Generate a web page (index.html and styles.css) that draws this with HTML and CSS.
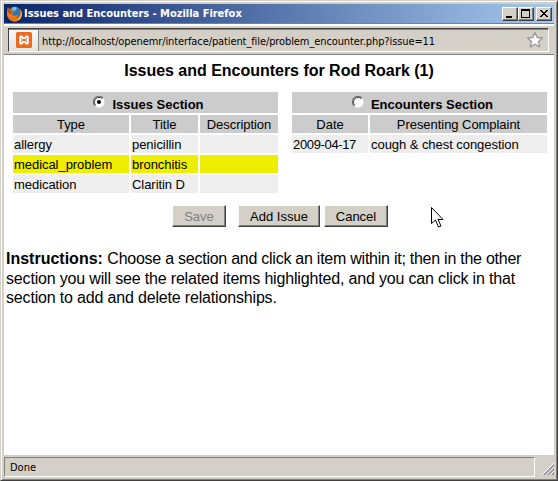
FILE: index.html
```html
<!DOCTYPE html>
<html lang="en">
<head>
<meta charset="utf-8">
<title>Issues and Encounters</title>
<link rel="stylesheet" href="styles.css">
</head>
<body>
<div class="window">
  <header class="titlebar">
    <svg class="fox" width="17" height="16" viewBox="0 0 17 16"><circle cx="8.5" cy="8" r="7" fill="#e66b13"/><circle cx="8.8" cy="6.2" r="5.6" fill="#2876bd"/><path d="M6 2q3-2 5 0L9 5 6 4z" fill="#75c3e5"/><path d="M1 4l1-3 2 3 4 1-2 3 2 2 4-1c-1 4-6 4-8 1C3 13 6 14 10 13c4-1 5-5 4-10 3 4 2 9-1 11-5 4-11 0-12-5z" fill="#f17a13"/><path d="M14 3c3 6 0 10-4 11 5 1 8-6 4-11" fill="#ffd03b"/><path d="M1 4l1-2 2 3 3 1-3 2z" fill="#b94916"/></svg>
    <span class="title">Issues and Encounters - Mozilla Firefox</span>
    <div class="controls">
      <span class="ctl"><svg width="12" height="10"><path d="M2 7h6v2H2z"/></svg></span>
      <span class="ctl"><svg width="12" height="10"><path fill-rule="evenodd" d="M1 0h9v9H1zM2 2v6h7V2z"/></svg></span>
      <span class="ctl close"><svg width="12" height="10" shape-rendering="crispEdges"><path d="M2 1h2v1h1v1h2V2h1V1h2v1H9v1H8v1H7v1h1v1h1v1h1v1H8V7H7V6H5v1H4v1H2V7h1V6h1V5h1V4H4V3H3V2H2z"/></svg></span>
    </div>
  </header>
  <div class="toolbar">
    <div class="location">
      <div class="site"><svg width="16" height="16" viewBox="0 0 16 16"><rect width="16" height="16" rx="1.5" fill="#ed6b20"/><path d="M5 4.200Q2.500 6 5 8q-2.500 2 0 3.800 1.500 0 1.700-1.900h2.600q.2 1.900 1.700 1.900 2.500-1.800 0-3.800 2.500-2 0-3.800-1.500 0-1.700 1.900H6.700Q6.500 4.200 5 4.200z" fill="none" stroke="#fff" stroke-width="1.800"/></svg></div>
      <span class="url">http://localhost/openemr/interface/patient_file/problem_encounter.php?issue=11</span>
      <svg class="star" width="18" height="18" viewBox="0 0 18 18"><path d="M9 1.500l2.200 5 5.300.500-4 3.600 1.200 5.300L9 13.200l-4.700 2.700 1.200-5.300-4-3.600 5.300-.500z" fill="#fff" stroke="#999" stroke-width="1.300" stroke-linejoin="round"/></svg>
    </div>
  </div>
  <main class="page">
    <h1><span>Issues and Encounters for Rod Roark (1)</span></h1>
    <div class="sections">
      <div class="grid issues">
        <div class="head"><svg class="radio" width="12" height="12" viewBox="0 0 12 12"><circle cx="6" cy="6" r="5.500" fill="#fff"/><path d="M2 10A5.500 5.500 0 0 1 10 2" fill="none" stroke="#777" stroke-width="1.200"/><path d="M2.800 9.200A4.400 4.400 0 0 1 9.200 2.800" fill="none" stroke="#404040"/><circle cx="6" cy="6" r="2" fill="#000"/></svg><b>Issues Section</b></div>
        <div class="th">Type</div><div class="th">Title</div><div class="th">Description</div>
        <div>allergy</div><div>penicillin</div><div></div>
        <div class="on">medical_problem</div><div class="on">bronchitis</div><div class="on"></div>
        <div>medication</div><div>Claritin D</div><div></div>
      </div>
      <div class="grid encounters">
        <div class="head"><svg class="radio" width="12" height="12" viewBox="0 0 12 12"><circle cx="6" cy="6" r="5.500" fill="#fff"/><path d="M2 10A5.500 5.500 0 0 1 10 2" fill="none" stroke="#777" stroke-width="1.200"/><path d="M2.800 9.200A4.400 4.400 0 0 1 9.200 2.800" fill="none" stroke="#404040"/></svg><b>Encounters Section</b></div>
        <div class="th">Date</div><div class="th">Presenting Complaint</div>
        <div class="date">2009-04-17</div><div>cough &amp; chest congestion</div>
      </div>
    </div>
    <div class="buttons">
      <button class="save" disabled>Save</button><button class="add">Add Issue</button><button class="cancel">Cancel</button>
    </div>
    <p><b>Instructions:</b> <span class="l1">Choose a section and click an item within it; then in the other</span><br><span class="l2">section you will see the related items highlighted, and you can click in that</span><br><span class="l3">section to add and delete relationships.</span></p>
    <svg class="cursor" width="13" height="22" viewBox="0 0 13 22"><path d="M.5.500v16l4-3.500 3 7 2.500-1-3-6.500h5z" fill="#fff" stroke="#000"/></svg>
  </main>
  <footer class="status">
    <div class="message">Done</div>
    <svg width="12" height="12" viewBox="0 0 12 12"><path d="M0 12L12 0M4 12l8-8M8 12l4-4" stroke="#fff"/><path d="M1 12.500L12.500 1M2 12.500L12.500 2M5 12.500L12.500 5M6 12.500L12.500 6M9 12.500l3.500-3.500M10 12.500l2.500-2.500" stroke="#808080"/></svg>
  </footer>
</div>
</body>
</html>
```
FILE: styles.css
```css
* { box-sizing: border-box; }
body { margin: 0; font: 13px "Liberation Sans", Arial, sans-serif; color: #000; }
.window {
  width: 558px; height: 481px; padding: 3px;
  background: #d4d0c8; border: 1px solid; border-color: #d4d0c8 #404040 #404040 #d4d0c8;
  box-shadow: inset 1px 1px #fff, inset -1px -1px #808080;
  display: flex; flex-direction: column;
}
.titlebar { height: 19px; flex: none; width: 550px; display: flex; align-items: center; padding: 0 2px; background: linear-gradient(90deg, #0a246a, #a6caf0); }
.fox { margin-right: 1px; flex: none; }
.title { color: #fff; font: bold 11px/18px "DejaVu Sans Condensed", "DejaVu Sans", sans-serif; white-space: nowrap; letter-spacing: -.02px; }
.controls { display: flex; margin-left: auto; }
.ctl { width: 16px; height: 14px; padding: 1px; background: #d4d0c8; border: 1px solid; border-color: #fff #404040 #404040 #fff; box-shadow: inset -1px -1px #808080; }
.ctl svg { display: block; }
.close { margin-left: 2px; }
.toolbar { width: 550px; height: 32px; flex: none; border-top: 1px solid #808080; border-bottom: 1px solid #808080; box-shadow: inset 0 2px #fff; padding: 4px 5px 2px 4px; }
.location { width: 541px; height: 24px; border: 1px solid; border-color: #404040 #fff #fff #404040; box-shadow: inset 0 1px #808080; display: flex; align-items: center; }
.site { width: 30px; height: 21px; margin-top: 1px; padding: 2px 0 0 7px; background: linear-gradient(#f8f8f7, #e5e3df); border-right: 1px solid #808080; flex: none; }
.site svg { display: block; }
.url { font: 11px/18px "DejaVu Sans Condensed", "DejaVu Sans", sans-serif; margin: 3px 0 0 3px; white-space: nowrap; letter-spacing: -.1px; }
.star { margin: 0 4px 0 auto; flex: none; }
.page { position: relative; width: 550px; height: 400px; flex: none; background: #fff; overflow: hidden; }
h1 { margin: 7px 0 0; font-size: 16px; line-height: 18px; text-align: center; letter-spacing: -.02px; }
.sections { display: flex; gap: 14px; padding: 12px 0 0 9px; align-items: flex-start; }
.grid { display: grid; gap: 2px; grid-auto-rows: 18px; line-height: 20px; }
.issues { grid-template: 21px / 116px 67px 78px; }
.encounters { grid-template: 21px / 76px 177px; }
.grid > div { background: #eee; padding-left: 1px; white-space: nowrap; letter-spacing: -.05px; }
.grid > .date { letter-spacing: -.35px; }
.grid > .th { background: #ccc; text-align: center; padding: 0; }
.grid > .head { grid-column: 1 / -1; background: #ccc; padding: 3px 0 0 6px; display: flex; justify-content: center; letter-spacing: 0; }
.radio { margin: 1px 7px 0 0; }
.grid > .on { background: #ee0; }
.buttons { display: flex; padding: 12px 0 0 168px; }
button { height: 22px; padding: 0; font: 13px "Liberation Sans", Arial, sans-serif; background: #d4d0c8; color: #000; border: 1px solid; border-color: #fff #404040 #404040 #fff; box-shadow: inset -1px -1px #808080; }
.save { width: 54px; margin-right: 12px; color: #808080; }
.add { width: 82px; margin-right: 4px; }
.cancel { width: 64px; }
p { margin: 22px 0 0 2px; font-size: 16px; line-height: 19.5px; white-space: nowrap; }
.l1 { letter-spacing: -.25px; }
.l2, .l3 { letter-spacing: -.17px; }
.cursor { position: absolute; left: 427px; top: 152px; }
.status { display: flex; width: 550px; height: 23px; padding-top: 2px; }
.message { width: 531px; height: 20px; border: 1px solid; border-color: #808080 #fff #fff #808080; padding-left: 5px; font: 11px/19px "DejaVu Sans Condensed", "DejaVu Sans", sans-serif; }
.status svg { margin: 6px 0 0 7px; }
```
